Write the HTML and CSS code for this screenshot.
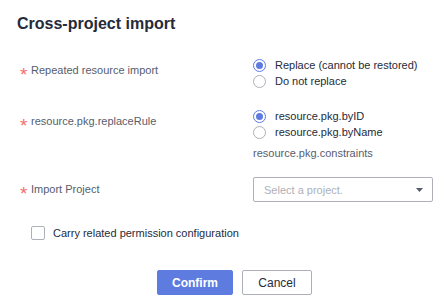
FILE: index.html
```html
<!DOCTYPE html>
<html>
<head>
<meta charset="utf-8">
<link rel="stylesheet" href="styles.css">
</head>
<body>
<div class="dialog">
  <h1 class="title">Cross-project import</h1>
  <div class="form">
    <div class="item item-1">
      <div class="label"><span class="star">*</span>Repeated resource import</div>
      <div class="control">
        <label class="radio checked"><span class="dot"></span>Replace (cannot be restored)</label>
        <label class="radio"><span class="dot"></span>Do not replace</label>
      </div>
    </div>
    <div class="item item-2">
      <div class="label"><span class="star">*</span>resource.pkg.replaceRule</div>
      <div class="control">
        <label class="radio checked"><span class="dot"></span>resource.pkg.byID</label>
        <label class="radio"><span class="dot"></span>resource.pkg.byName</label>
        <div class="hint">resource.pkg.constraints</div>
      </div>
    </div>
    <div class="item item-3">
      <div class="label label-sel"><span class="star">*</span>Import Project</div>
      <div class="control">
        <div class="select"><span class="placeholder">Select a project.</span>
          <svg class="arrow" width="7" height="4" viewBox="0 0 7 4"><path d="M0 0H7L3.5 4Z" fill="#575d6c"/></svg>
        </div>
      </div>
    </div>
    <label class="check"><span class="box"></span>Carry related permission configuration</label>
  </div>
  <div class="footer">
    <button class="btn primary">Confirm</button>
    <button class="btn">Cancel</button>
  </div>
</div>
</body>
</html>
```

FILE: styles.css
```css
* { box-sizing: border-box; }
html, body { margin: 0; padding: 0; background: #fff; }
body {
  font-family: "Liberation Sans", Arial, sans-serif;
  font-size: 11px;
  color: #575d6c;
  width: 444px;
  height: 304px;
  overflow: hidden;
}
.dialog { padding-top: 12px; }
.title {
  margin: 0 0 0 17px;
  font-size: 16px;
  line-height: 24px;
  font-weight: bold;
  color: #252b3a;
}
.form { margin-top: 21px; }
.item { display: flex; align-items: flex-start; }
.item-2 { margin-top: 19px; }
.item-3 { margin-top: 16px; }
.label {
  width: 253px;
  flex: none;
  padding-left: 20px;
  padding-top: 5px;
  line-height: 16px;
  height: 21px;
}
.label-sel { padding-top: 4px; }
.star {
  display: inline-block;
  color: #f66f6a;
  width: 11px;
  font-size: 19px;
  line-height: 16px;
  vertical-align: top;
  position: relative;
  top: 5px;
}
.control { display: flex; flex-direction: column; }
.radio {
  display: flex;
  align-items: center;
  line-height: 16px;
  height: 16px;
  color: #252b3a;
}
.radio .dot {
  width: 13px;
  height: 13px;
  border: 1px solid #adb0b8;
  border-radius: 50%;
  margin-right: 9px;
  display: flex;
  align-items: center;
  justify-content: center;
}
.radio.checked .dot { border-color: #5e7ce0; }
.radio.checked .dot::after {
  content: "";
  width: 7px;
  height: 7px;
  border-radius: 50%;
  background: #5e7ce0;
}
.hint { margin-top: 5px; line-height: 16px; color: #575d6c; }
.select {
  width: 180px;
  height: 25px;
  border: 1px solid #adb0b8;
  border-radius: 2px;
  display: flex;
  align-items: center;
  justify-content: space-between;
  padding: 0 9px 0 10px;
}
.placeholder { color: #adb0b8; }
.check {
  display: flex;
  align-items: center;
  margin: 23px 0 0 31px;
  line-height: 16px;
  color: #252b3a;
}
.check .box {
  width: 14px;
  height: 14px;
  border: 1px solid #adb0b8;
  border-radius: 2px;
  margin-right: 8px;
}
.footer {
  display: flex;
  gap: 9px;
  margin-top: 29px;
  padding-left: 157px;
}
.btn {
  height: 25px;
  width: 70px;
  border: 1px solid #adb0b8;
  border-radius: 2px;
  background: #fff;
  color: #252b3a;
  font-family: "Liberation Sans", Arial, sans-serif;
  font-size: 12px;
  padding: 0;
}
.btn.primary {
  width: 76px;
  background: #5e7ce0;
  border-color: #5e7ce0;
  color: #fff;
  font-weight: bold;
}
```
